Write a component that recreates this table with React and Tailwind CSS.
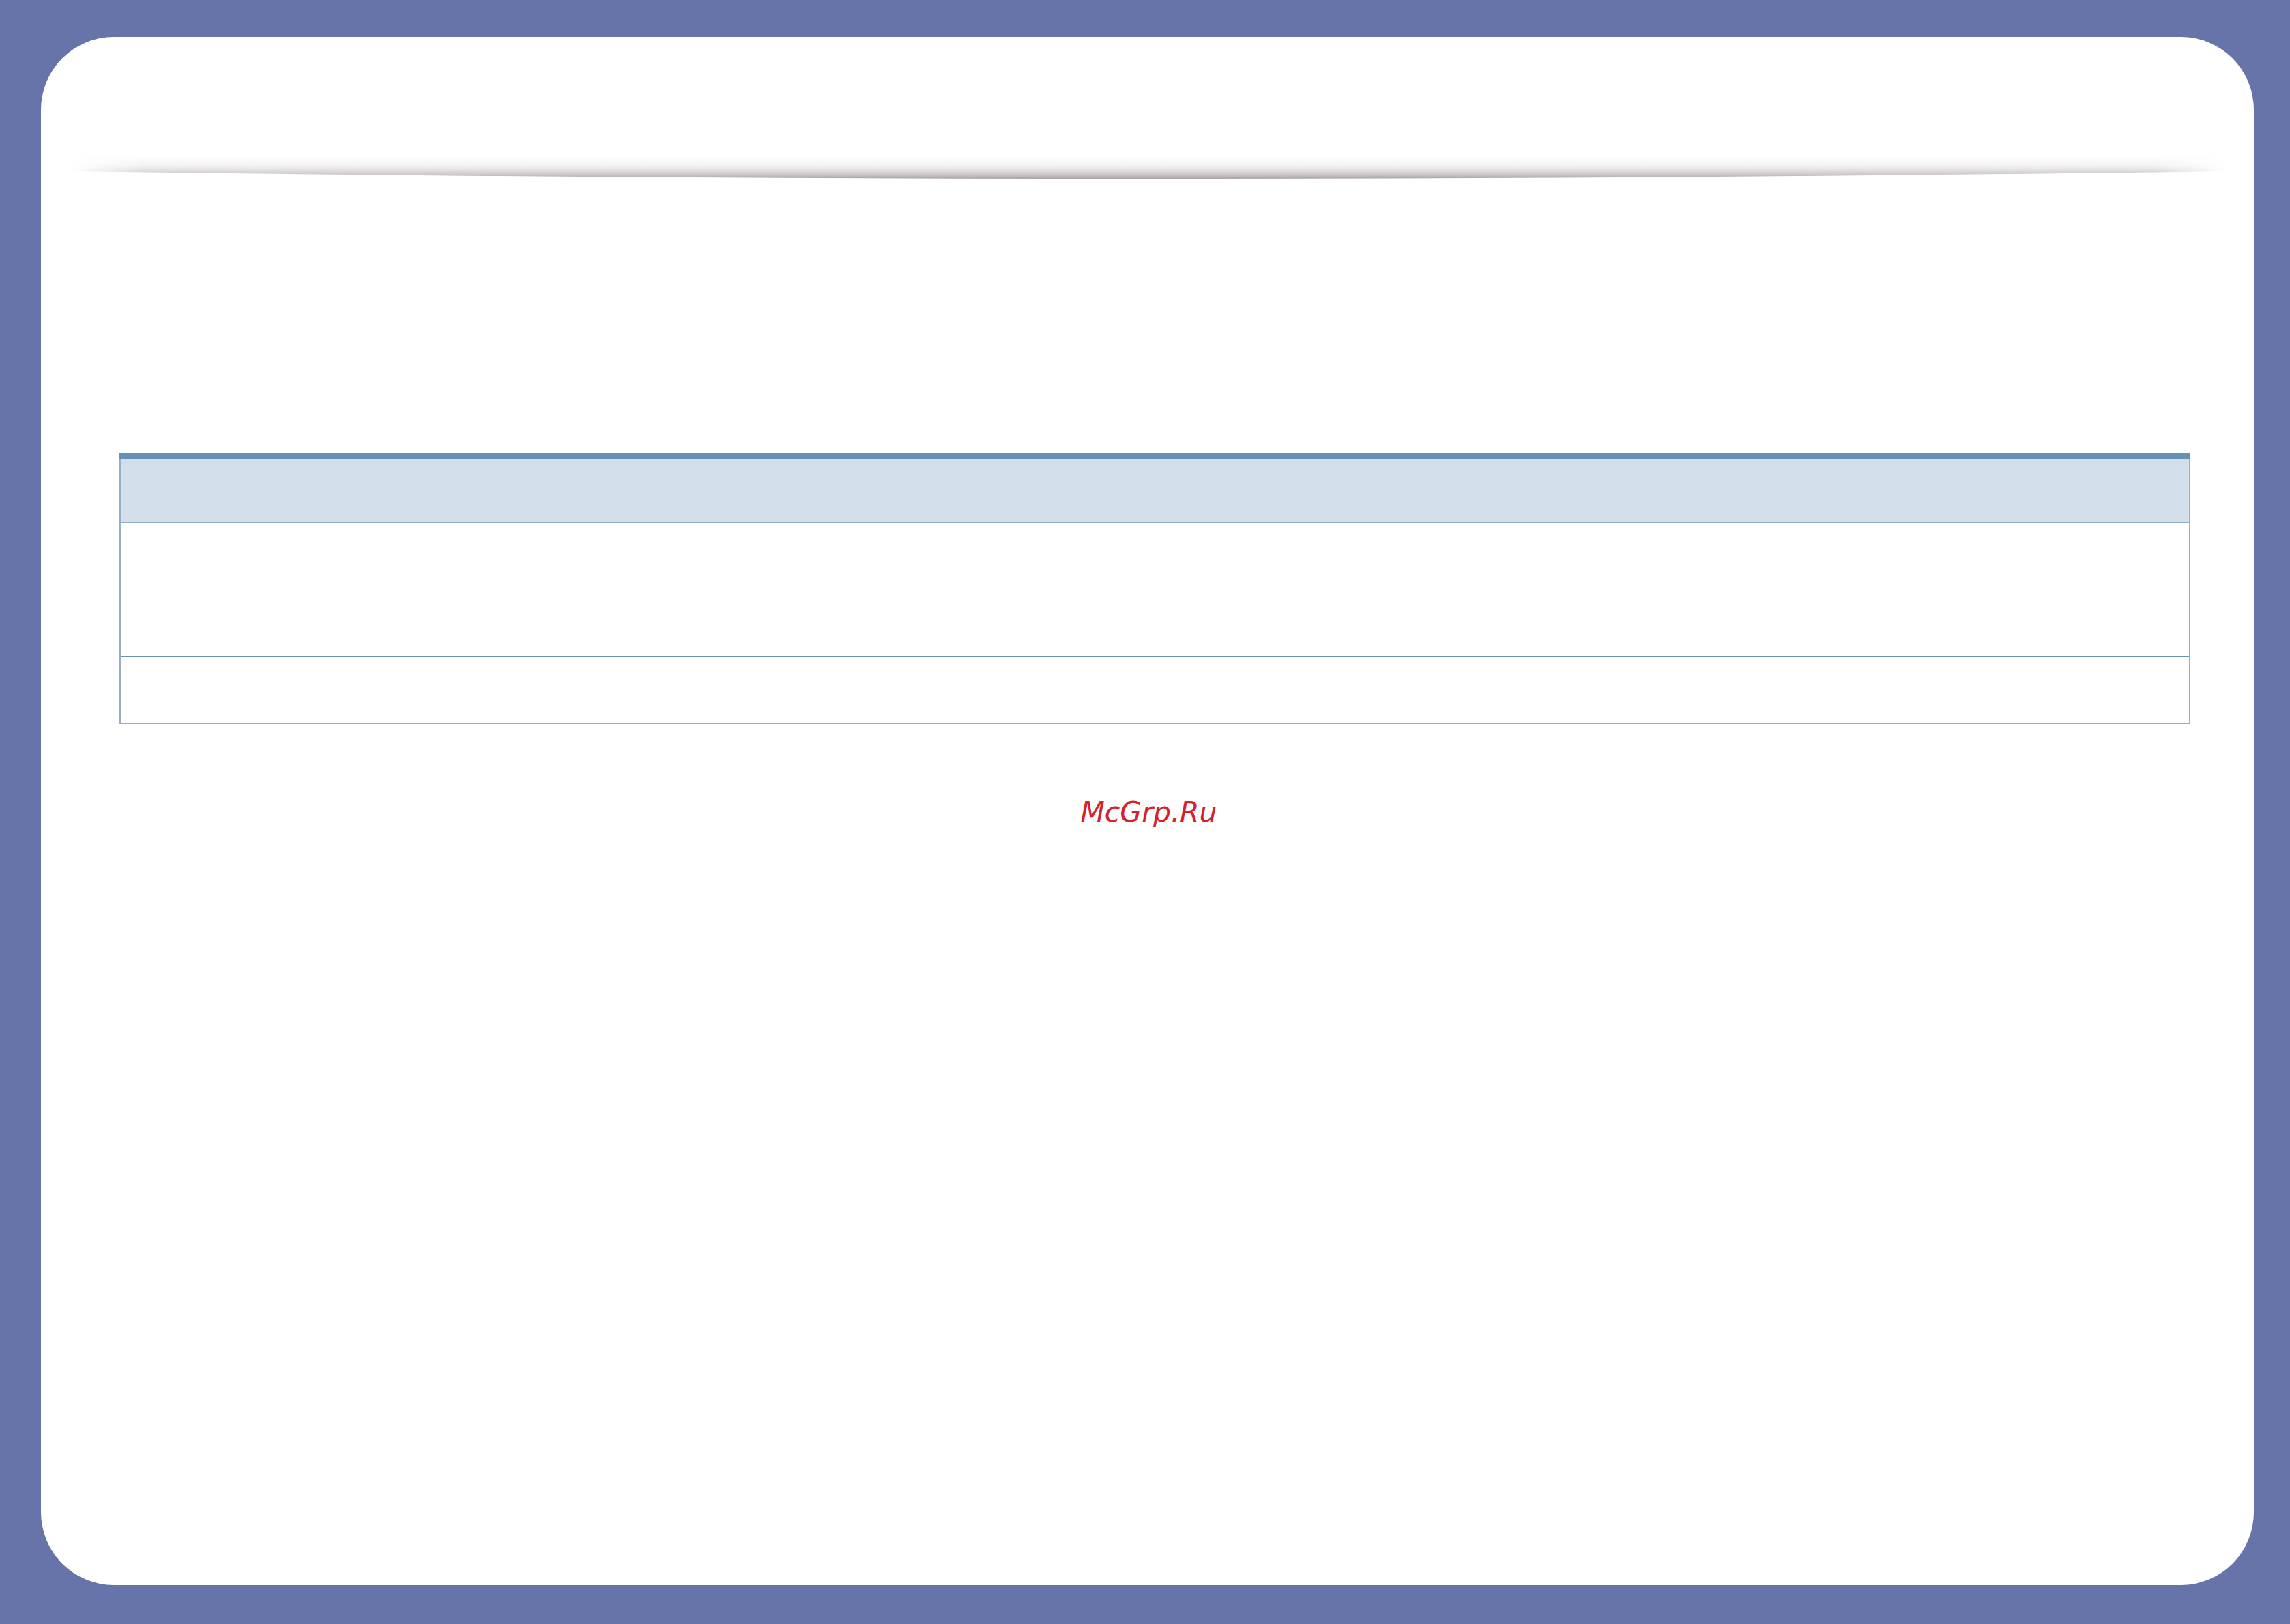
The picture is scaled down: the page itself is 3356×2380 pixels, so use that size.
import React from 'react';

// Page frame: blue backdrop, white rounded sheet, a shaded rule and an empty table
const rows = [0, 1, 2];

function HeaderShade() {
    return (
        <svg className="block ml-[40px] mt-[174px]" width="3166" height="36" viewBox="0 0 3166 36">
            <defs>
                <linearGradient id="shadeV" x1="0" y1="0" x2="0" y2="1">
                    <stop offset="0" stopColor="#ffffff" />
                    <stop offset="0.45" stopColor="#f4f3f3" />
                    <stop offset="0.8" stopColor="#cfcbca" />
                    <stop offset="1" stopColor="#a9a4a2" />
                </linearGradient>
                <linearGradient id="shadeH" x1="0" y1="0" x2="1" y2="0">
                    <stop offset="0" stopColor="#000" />
                    <stop offset="0.035" stopColor="#fff" />
                    <stop offset="0.965" stopColor="#fff" />
                    <stop offset="1" stopColor="#000" />
                </linearGradient>
                <mask id="shadeMask">
                    <rect x="0" y="0" width="3166" height="36" fill="url(#shadeH)" />
                </mask>
            </defs>
            <path d="M0,0 L3166,0 L3166,23 Q1583,45 0,23 Z" fill="url(#shadeV)" mask="url(#shadeMask)" />
        </svg>
    );
}

export default function App() {
    return (
        <div className="w-[3356px] h-[2380px] bg-[#6674aa] pt-[54px] pl-[60px] overflow-hidden">
            {/* Sheet */}
            <div className="w-[3243px] h-[2269px] bg-white rounded-[107px] flex flex-col">
                <HeaderShade />

                {/* Table */}
                <div className="ml-[115px] mt-[400px] w-[3035px]">
                    <div className="h-[8px] bg-[#6691b4]" />
                    <div className="border-l-2 border-r-2 border-b-2 border-[#97b0ca]">
                        <div className="flex h-[95px] bg-[#d2dee9] border-b-2 border-[#94aec8]">
                            <div className="w-[2095px] border-r border-[#6a93b6]" />
                            <div className="w-[469px] border-r border-[#6a93b6]" />
                            <div className="flex-1" />
                        </div>
                        {rows.map((r) => (
                            <div
                                key={r}
                                className={r < 2 ? 'flex h-[98px] border-b border-[#6a93b6]' : 'flex h-[96px]'}
                            >
                                <div className="w-[2095px] border-r border-[#6a93b6]" />
                                <div className="w-[469px] border-r border-[#6a93b6]" />
                                <div className="flex-1" />
                            </div>
                        ))}
                    </div>
                </div>

                {/* Watermark */}
                <p className="mt-[105px] pl-[4px] text-center font-['DejaVu_Sans',sans-serif] italic text-[41px] leading-[48px] text-[#d4212a]">
                    McGrp.Ru
                </p>
            </div>
        </div>
    );
}
